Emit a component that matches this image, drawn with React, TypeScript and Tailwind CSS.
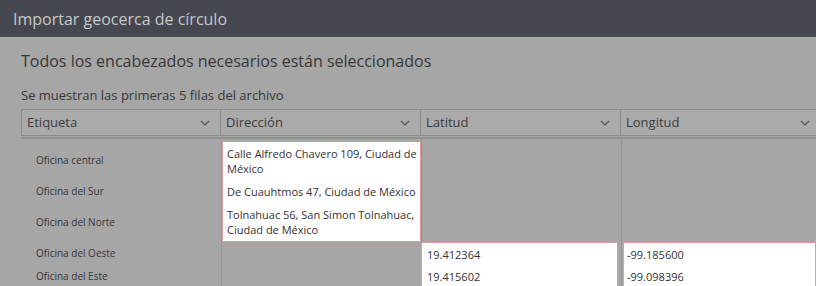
import React from "react";

const columns = ["Etiqueta", "Dirección", "Latitud", "Longitud"];

const labels = [
  "Oficina central",
  "Oficina del Sur",
  "Oficina del Norte",
  "Oficina del Oeste",
  "Oficina del Este",
];

const addresses = [
  ["Calle Alfredo Chavero 109, Ciudad de", "México"],
  ["De Cuauhtmos 47, Ciudad de México"],
  ["Tolnahuac 56, San Simon Tolnahuac,", "Ciudad de México"],
];

function Chevron() {
  return (
    <svg width="10" height="6" viewBox="0 0 10 6" className="shrink-0">
      <polyline points="1,1 5,5 9,1" fill="none" stroke="#5c5c5c" strokeWidth="1.3" />
    </svg>
  );
}

function HeaderCell({ title, first }: { title: string; first?: boolean }) {
  return (
    <div
      className={`flex h-[27px] w-[200px] shrink-0 items-center justify-between border-y border-r border-[#8c8c8c] bg-[#aaaaaa] pl-[5px] pr-[10px] ${first ? "border-l" : ""}`}
    >
      <span className="text-[13px] text-[#3d3d3d]">{title}</span>
      <Chevron />
    </div>
  );
}

export default function App() {
  return (
    <div
      className="h-[286px] w-[816px] overflow-hidden bg-[#a6a6a6]"
      style={{ fontFamily: "'Open Sans', 'DejaVu Sans', sans-serif" }}
    >
      <div className="flex h-[37px] items-center bg-[#46484f] px-[13px] text-[16px] text-[#c6c7c9]">
        Importar geocerca de círculo
      </div>

      <div className="border-t border-[#adadad] pl-[21px]">
        <h2 className="mt-[11px] text-[16px] leading-6 text-[#383838]">
          Todos los encabezados necesarios están seleccionados
        </h2>
        <p className="mt-[13px] text-[13px] leading-[18px] text-[#383838]">
          Se muestran las primeras 5 filas del archivo
        </p>

        <div className="mt-[5px] flex w-[800px]">
          {columns.map((c, i) => (
            <HeaderCell key={c} title={c} first={i === 0} />
          ))}
        </div>

        <div className="mt-[1px] grid w-[800px] grid-cols-[200px_200px_200px_200px] grid-rows-[2px_39px_23px_39px_23px_23px] border-t-2 border-[#929292] text-[11px] leading-[15px] text-[#333333]">
          {/* column separators */}
          <div className="col-start-2 row-span-full row-start-1 border-l border-[#959595]" />
          <div className="col-start-3 row-span-full row-start-1 border-l border-[#959595]" />
          <div className="col-start-4 row-span-full row-start-1 border-l border-[#959595]" />

          {labels.map((l, i) => (
            <div
              key={l}
              className="col-start-1 flex items-center pl-[15px] text-[10px] text-[#363636]"
              style={{ gridRowStart: i + 2 }}
            >
              {l}
            </div>
          ))}

          <div className="col-start-2 row-start-2 row-end-5 ml-[1px] grid w-[199px] grid-rows-[38px_23px_38px] border border-[#e39a9a] bg-white">
            {addresses.map((a, i) => (
              <div key={i} className="flex flex-col justify-center pl-[4px]">
                {a.map((line) => (
                  <span key={line}>{line}</span>
                ))}
              </div>
            ))}
          </div>

          <div className="col-start-3 row-start-5 row-end-7 grid w-[197px] grid-rows-[22px_23px] border border-[#e39a9a] bg-white">
            <div className="flex items-center pl-[5px]">19.412364</div>
            <div className="flex items-center pl-[5px]">19.415602</div>
          </div>

          <div className="col-start-4 row-start-5 row-end-7 ml-[2px] grid w-[193px] grid-rows-[22px_23px] border border-[#e39a9a] bg-white">
            <div className="flex items-center pl-[3px]">-99.185600</div>
            <div className="flex items-center pl-[3px]">-99.098396</div>
          </div>
        </div>
      </div>
    </div>
  );
}
